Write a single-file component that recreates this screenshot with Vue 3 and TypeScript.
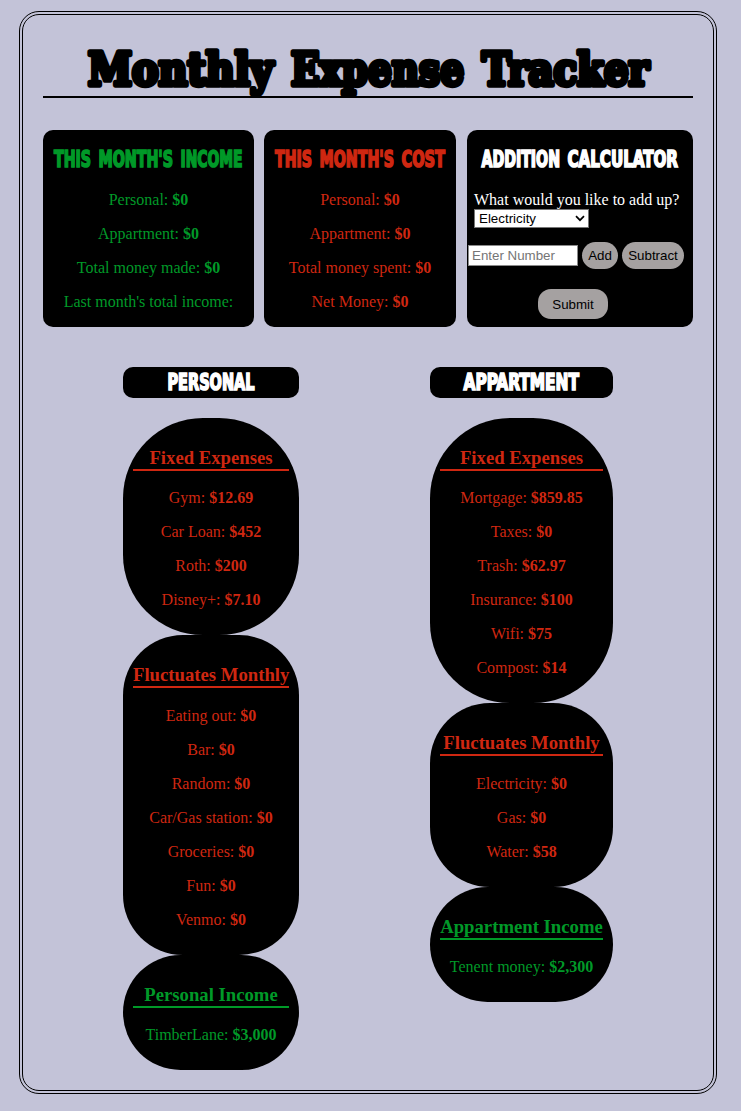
<script setup lang="ts">
import { ref } from 'vue'

interface Word { text: string; x: number; w: number }
interface Row { label: string; value: string }
interface Group { title: string; kind: string; shape: string; rows: Row[] }
interface Column { cls: string; width: number; word: Word; groups: Group[] }
interface Summary { cls: string; width: number; words: Word[]; rows: Row[] }

const row = (label: string, value = '$0'): Row => ({ label, value })

// Horizontal condensing applied to the poster-style headings.
const squeeze = 0.7
const condensed = `scale(${squeeze} 1)`

const titleWords: Word[] = [
  { text: 'Monthly', x: 45, w: 185 },
  { text: 'Expense', x: 248, w: 173 },
  { text: 'Tracker', x: 439, w: 167 },
]

const summaries: Summary[] = [
  {
    cls: 'income', width: 211,
    words: [{ text: 'THIS', x: 11, w: 37 }, { text: "MONTH'S", x: 55.5, w: 74.5 }, { text: 'INCOME', x: 137.5, w: 62 }],
    rows: [row('Personal:'), row('Appartment:'), row('Total money made:'), row("Last month's total income:", '')],
  },
  {
    cls: 'cost', width: 192,
    words: [{ text: 'THIS', x: 11, w: 37 }, { text: "MONTH'S", x: 55.5, w: 74.5 }, { text: 'COST', x: 137.5, w: 43.5 }],
    rows: [row('Personal:'), row('Appartment:'), row('Total money spent:'), row('Net Money:')],
  },
]

const calcWords: Word[] = [
  { text: 'ADDITION', x: 14.5, w: 78.5 },
  { text: 'CALCULATOR', x: 100.5, w: 110.5 },
]

const columns: Column[] = [
  {
    cls: 'personal', width: 176, word: { text: 'PERSONAL', x: 44.5, w: 87 },
    groups: [
      { title: 'Fixed Expenses', kind: 'cost', shape: 'wide', rows: [row('Gym:', '$12.69'), row('Car Loan:', '$452'), row('Roth:', '$200'), row('Disney+:', '$7.10')] },
      { title: 'Fluctuates Monthly', kind: 'cost', shape: 'soft', rows: [row('Eating out:'), row('Bar:'), row('Random:'), row('Car/Gas station:'), row('Groceries:'), row('Fun:'), row('Venmo:')] },
      { title: 'Personal Income', kind: 'income', shape: 'soft', rows: [row('TimberLane:', '$3,000')] },
    ],
  },
  {
    cls: 'appartment', width: 183, word: { text: 'APPARTMENT', x: 33.5, w: 115.5 },
    groups: [
      { title: 'Fixed Expenses', kind: 'cost', shape: 'wide', rows: [row('Mortgage:', '$859.85'), row('Taxes:'), row('Trash:', '$62.97'), row('Insurance:', '$100'), row('Wifi:', '$75'), row('Compost:', '$14')] },
      { title: 'Fluctuates Monthly', kind: 'cost', shape: 'soft', rows: [row('Electricity:'), row('Gas:'), row('Water:', '$58')] },
      { title: 'Appartment Income', kind: 'income', shape: 'soft', rows: [row('Tenent money:', '$2,300')] },
    ],
  },
]

const options = ['Electricity', 'Gas', 'Water', 'Eating out', 'Bar', 'Random', 'Groceries', 'Fun', 'Venmo']
const selected = ref('Electricity')
const amount = ref('')
</script>

<template>
  <main class="frame">
    <h1 class="title">
      <svg width="650" height="61" viewBox="0 0 650 61">
        <text v-for="w in titleWords" :key="w.text" :x="w.x" y="49.6" :textLength="w.w" lengthAdjust="spacingAndGlyphs">{{ w.text }}</text>
      </svg>
    </h1>

    <section class="summary">
      <article v-for="s in summaries" :key="s.cls" class="card" :class="s.cls">
        <h2>
          <svg :width="s.width" height="45">
            <g :transform="condensed">
              <text v-for="w in s.words" :key="w.text" :x="w.x / squeeze" y="37.5" :textLength="w.w / squeeze" lengthAdjust="spacingAndGlyphs">{{ w.text }}</text>
            </g>
          </svg>
        </h2>
        <p v-for="r in s.rows" :key="r.label">{{ r.label }} <b>{{ r.value }}</b></p>
      </article>
      <article class="card calc">
        <h2>
          <svg width="226" height="45">
            <g :transform="condensed">
              <text v-for="w in calcWords" :key="w.text" :x="w.x / squeeze" y="37.5" :textLength="w.w / squeeze" lengthAdjust="spacingAndGlyphs">{{ w.text }}</text>
            </g>
          </svg>
        </h2>
        <label class="question">What would you like to add up?
          <span class="picker">
            <select v-model="selected">
              <option v-for="o in options" :key="o">{{ o }}</option>
            </select>
            <svg class="chevron" width="10" height="7" viewBox="0 0 10 7"><path d="M1 1.2 5 5.2 9 1.2" /></svg>
          </span>
        </label>
        <div class="entry">
          <input v-model="amount" placeholder="Enter Number" />
          <button class="add">Add</button>
          <button class="subtract">Subtract</button>
        </div>
        <button class="submit">Submit</button>
      </article>
    </section>

    <section class="columns">
      <div v-for="c in columns" :key="c.cls" class="column" :class="c.cls">
        <h2 class="heading">
          <svg :width="c.width" height="31">
            <g :transform="condensed">
              <text :x="c.word.x / squeeze" y="23.5" :textLength="c.word.w / squeeze" lengthAdjust="spacingAndGlyphs">{{ c.word.text }}</text>
            </g>
          </svg>
        </h2>
        <article v-for="g in c.groups" :key="g.title" class="group" :class="[g.kind, g.shape]">
          <h3>{{ g.title }}</h3>
          <p v-for="r in g.rows" :key="r.label">{{ r.label }} <b>{{ r.value }}</b></p>
        </article>
      </div>
    </section>
  </main>
</template>

<style>
html, body { margin: 0; background: #c3c3d8; }
</style>

<style scoped>
.frame {
  box-sizing: border-box;
  width: 698px;
  height: 1083px;
  margin: 11px 0 17px 19px;
  padding: 20px;
  border: 4px double #000;
  border-radius: 20px;
  font-family: "Liberation Serif", "Times New Roman", serif;
  font-size: 16px;
  line-height: 18px;
  display: flow-root;
}
svg { display: block; overflow: visible; }
.title { margin: 0; border-bottom: 2px solid #000; }
.title text {
  font: bold 45px "DejaVu Serif", serif;
  fill: #000;
  stroke: #000;
  stroke-width: 5.4px;
  stroke-linejoin: round;
}
.summary { display: flex; margin-top: 32px; }
.card { height: 197px; background: #000; border-radius: 10px; text-align: center; }
.card.income { width: 211px; margin-right: 10px; }
.card.cost { width: 192px; margin-right: 11px; }
.card.calc { width: 226px; color: #fff; }
.income { color: #009928; }
.cost { color: #cf2711; }
h2 { margin: 0; }
h2 text {
  font: bold 22.5px "DejaVu Sans Condensed", "DejaVu Sans", sans-serif;
  fill: currentColor;
  stroke: currentColor;
  stroke-width: 1.7px;
}
p { margin: 16px 0; }
.question { display: block; margin: 16px 0 0 7px; text-align: left; white-space: nowrap; }
.picker { position: relative; display: block; width: 115px; height: 19px; }
select {
  appearance: none;
  display: block;
  box-sizing: border-box;
  width: 115px;
  height: 19px;
  padding: 0 4px;
  border: 1px solid #767676;
  border-radius: 0;
  background: #fff;
  color: #000;
  font: 13.333px "Liberation Sans", Arial, sans-serif;
}
.chevron { position: absolute; right: 4px; top: 6px; }
.chevron path { fill: none; stroke: #000; stroke-width: 1.7; }
.entry { display: flex; align-items: center; gap: 4px; margin: 14px 0 0 1px; }
input {
  box-sizing: border-box;
  width: 110px;
  height: 21px;
  padding: 1px 3px;
  border: 1px solid #8a8a8a;
  font: 13.333px "Liberation Sans", Arial, sans-serif;
}
input::placeholder { color: #757575; }
button {
  box-sizing: border-box;
  padding: 0;
  border: 0;
  background: #a5a1a1;
  color: #000;
  font: 13.333px "Liberation Sans", Arial, sans-serif;
}
.add, .subtract { height: 27px; border-radius: 15px; }
.add { width: 36px; }
.subtract { width: 62px; }
.submit { display: block; width: 70px; height: 30px; margin: 20px 0 0 71px; border-radius: 13px; }
.columns { display: flex; align-items: flex-start; margin: 40px 0 0 80px; gap: 131px; }
.personal { width: 176px; }
.appartment { width: 183px; }
.heading { height: 31px; margin-bottom: 20px; background: #000; border-radius: 10px; color: #fff; }
.group { display: flow-root; padding: 10px; background: #000; text-align: center; white-space: nowrap; }
.wide { border-radius: 80px; }
.soft { border-radius: 60px; }
h3 { margin: 18.72px 0; font-size: 18.72px; line-height: 22px; border-bottom: 2px solid currentColor; }
</style>
